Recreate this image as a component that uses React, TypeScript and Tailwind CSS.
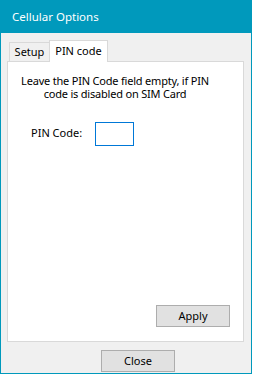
import React from "react";

export default function App() {
  return (
    <div
      className="w-[252px] h-[374px] flex flex-col border-x border-b border-[#0099bc] bg-[#f0f0f0] text-black text-[11px]"
      style={{ fontFamily: '"Noto Sans", "Liberation Sans", sans-serif' }}
    >
      <div className="h-[33px] shrink-0 bg-[#0099bc] text-white flex items-center pl-[11px] text-[11.5px]">
        Cellular Options
      </div>
      <div className="flex-1 flex flex-col pt-[7px] pl-[6px] pr-[7px] pb-[1px]">
        <div className="h-[21px] flex items-end pl-[2px] shrink-0">
          <div className="w-[41px] h-[19px] border-t border-x border-[#d9d9d9] bg-[#f0f0f0] flex items-center justify-center pt-[1px]">
            Setup
          </div>
          <div className="relative z-10 -ml-[1px] -mb-[1px] w-[59px] h-[22px] border-t border-x border-[#d9d9d9] bg-white flex items-center justify-center">
            PIN code
          </div>
        </div>
        <div className="flex-1 flex flex-col border border-[#d9d9d9] bg-white">
          <div className="pt-[12px] w-[214px] flex flex-col items-center leading-[13px] whitespace-nowrap tracking-[-0.2px]">
            <div>Leave the PIN Code field empty, if PIN</div>
            <div>code is disabled on SIM Card</div>
          </div>
          <div className="mt-[22px] flex items-center pl-[23px]">
            <div className="w-[64px] pb-[2px]">PIN Code:</div>
            <div className="w-[39px] h-[24px] border border-[#0078d7] bg-white" />
          </div>
          <div className="mt-auto flex justify-end pr-[13px] pb-[14px]">
            <button className="w-[74px] h-[22px] border border-[#adadad] bg-[#e1e1e1] flex items-center justify-center">
              Apply
            </button>
          </div>
        </div>
        <button className="mt-[8px] ml-[94px] self-start w-[74px] h-[22px] border border-[#adadad] bg-[#e1e1e1] flex items-center justify-center shrink-0">
          Close
        </button>
      </div>
    </div>
  );
}
